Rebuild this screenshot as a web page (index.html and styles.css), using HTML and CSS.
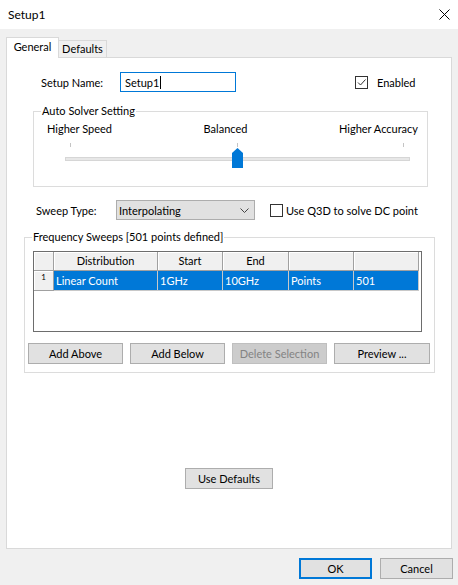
FILE: index.html
```html
<!DOCTYPE html>
<html>
<head>
<meta charset="utf-8">
<link rel="stylesheet" href="styles.css">
</head>
<body>
<div class="titlebar">
  <span class="title">Setup1</span>
  <svg class="close" width="11" height="11" viewBox="0 0 11 11"><path d="M0.5 0.5 L10.5 10.5 M10.5 0.5 L0.5 10.5" stroke="#000" stroke-width="1" fill="none"/></svg>
</div>
<div class="tabs">
  <div class="tab tab-active">General</div>
  <div class="tab tab-inactive">Defaults</div>
</div>
<div class="panel">
  <div class="name-row">
    <span class="name-label">Setup Name:</span>
    <div class="textbox">Setup1<span class="caret"></span></div>
    <span class="checkbox checked"><svg width="11" height="11" viewBox="0 0 11 11"><path d="M2 5.5 L4.5 8 L9.5 2.5" stroke="#333" stroke-width="1" fill="none"/></svg></span>
    <span class="check-label">Enabled</span>
  </div>

  <div class="group solver">
    <span class="legend">Auto Solver Setting</span>
    <div class="slider-labels">
      <span>Higher Speed</span>
      <span>Balanced</span>
      <span>Higher Accuracy</span>
    </div>
    <div class="slider">
      <span class="tick tick-l"></span>
      <span class="tick tick-m"></span>
      <span class="tick tick-r"></span>
      <div class="track"></div>
      <svg class="thumb" width="11" height="20" viewBox="0 0 11 20"><polygon points="0,5 5.5,0 11,5 11,20 0,20" fill="#0078d7"/></svg>
    </div>
  </div>

  <div class="sweep-row">
    <span class="sweep-label">Sweep Type:</span>
    <div class="combo">
      <span>Interpolating</span>
      <svg width="9" height="5" viewBox="0 0 9 5"><path d="M0.5 0.5 L4.5 4.5 L8.5 0.5" stroke="#444" stroke-width="1" fill="none"/></svg>
    </div>
    <span class="checkbox q3d-box"></span>
    <span class="q3d-label">Use Q3D to solve DC point</span>
  </div>

  <div class="group sweeps">
    <span class="legend">Frequency Sweeps [501 points defined]</span>
    <div class="grid">
      <div class="hcell rowhead"></div>
      <div class="hcell">Distribution</div>
      <div class="hcell">Start</div>
      <div class="hcell">End</div>
      <div class="hcell"></div>
      <div class="hcell"></div>
      <div class="filler"></div>
      <div class="hcell rowhead rownum">1</div>
      <div class="dcell">Linear Count</div>
      <div class="dcell">1GHz</div>
      <div class="dcell">10GHz</div>
      <div class="dcell">Points</div>
      <div class="dcell">501</div>
      <div class="filler"></div>
    </div>
    <div class="btn-row">
      <button class="btn">Add Above</button>
      <button class="btn">Add Below</button>
      <button class="btn btn-disabled">Delete Selection</button>
      <button class="btn">Preview ...</button>
    </div>
  </div>

  <button class="btn defaults-btn">Use Defaults</button>
</div>
<div class="footer">
  <button class="btn footer-btn ok-btn">OK</button>
  <button class="btn footer-btn">Cancel</button>
</div>
</body>
</html>
```
FILE: styles.css
```css
* { box-sizing: border-box; }
html, body { margin: 0; padding: 0; }
body {
  width: 458px;
  height: 585px;
  overflow: hidden;
  background: #f0f0f0;
  font-family: Lato, "Noto Sans", sans-serif;
  font-size: 11px;
  color: #000;
}
.titlebar {
  height: 29px;
  background: #fff;
  display: flex;
  align-items: center;
  justify-content: space-between;
  padding: 0 8px 0 8px;
}
.title { font-size: 12px; }
.close { display: block; }

.tabs {
  height: 29px;
  display: flex;
  align-items: flex-end;
  padding-left: 6px;
  margin-bottom: -1px;
  position: relative;
  z-index: 1;
}
.tab {
  border: 1px solid #d9d9d9;
  text-align: center;
}
.tab-active {
  width: 53px;
  height: 21px;
  background: #fff;
  border-bottom: none;
  line-height: 17px;
}
.tab-inactive {
  width: 48px;
  height: 18px;
  background: #f0f0f0;
  border-left: none;
  line-height: 16px;
}

.panel {
  margin: 0 6px;
  height: 492px;
  background: #fff;
  border: 1px solid #d9d9d9;
  display: flex;
  flex-direction: column;
}

.name-row {
  margin-top: 14px;
  height: 20px;
  display: flex;
  align-items: center;
  padding-left: 34px;
}
.name-label { width: 79px; }
.textbox {
  width: 116px;
  height: 20px;
  border: 1px solid #0078d7;
  padding-left: 4px;
  display: flex;
  align-items: center;
}
.caret {
  display: inline-block;
  width: 1px;
  height: 13px;
  background: #000;
  margin-left: 1px;
}
.checkbox {
  width: 13px;
  height: 13px;
  border: 1px solid #333;
  background: #fff;
  display: flex;
  align-items: center;
  justify-content: center;
}
.checked { margin-left: 119px; }
.check-label { margin-left: 9px; }

.group {
  position: relative;
  border: 1px solid #dcdcdc;
}
.legend {
  position: absolute;
  top: -8px;
  left: 7px;
  line-height: 14px;
  padding: 0 1px;
  background: #fff;
}
.solver {
  margin-top: 19px;
  margin-left: 26px;
  width: 395px;
  height: 76px;
  padding: 9px 9px 0 13px;
}
.slider-labels {
  display: flex;
  justify-content: space-between;
  line-height: 16px;
}
.slider {
  position: relative;
  height: 26px;
  margin: 6px 8px 0 18px;
}
.tick {
  position: absolute;
  top: 0;
  width: 1px;
  height: 4px;
  background: #c4c4c4;
}
.tick-l { left: 5px; }
.tick-m { left: 172px; }
.tick-r { left: 338px; }
.track {
  position: absolute;
  top: 14px;
  left: 0;
  right: 0;
  height: 4px;
  background: #e7e7e7;
  border: 1px solid #d6d6d6;
}
.thumb {
  position: absolute;
  top: 5px;
  left: 167px;
  display: block;
}

.sweep-row {
  margin-top: 13px;
  height: 20px;
  display: flex;
  align-items: center;
  padding-left: 29px;
}
.sweep-label { width: 80px; }
.combo {
  width: 139px;
  height: 20px;
  background: #e1e1e1;
  border: 1px solid #adadad;
  display: flex;
  align-items: center;
  justify-content: space-between;
  padding: 0 5px 0 2px;
}
.combo svg { display: block; }
.q3d-box { margin-left: 15px; }
.q3d-label { margin-left: 3px; }

.sweeps {
  margin-top: 17px;
  margin-left: 17px;
  width: 411px;
  height: 136px;
  padding: 13px 0 0 3px;
}
.grid {
  margin-left: 5px;
  width: 389px;
  height: 81px;
  border: 1px solid #6d6d6d;
  display: grid;
  grid-template-columns: 20px 104px 65px 66px 65px 65px 1fr;
  grid-template-rows: 19px 20px;
  align-content: start;
}
.hcell {
  background: #f0f0f0;
  border-right: 1px solid #a0a0a0;
  border-bottom: 1px solid #a0a0a0;
  box-shadow: inset 1px 1px 0 #fff;
  text-align: center;
  line-height: 18px;
}
.rownum {
  font-size: 8px;
  line-height: 12px;
  text-align: center;
}
.dcell {
  background: #0078d7;
  color: #fff;
  border-right: 1px solid #c8c8c8;
  border-bottom: 1px solid #c8c8c8;
  padding-left: 2px;
  line-height: 19px;
}
.filler { background: #fff; }

.btn {
  font-family: inherit;
  font-size: 11px;
  color: #000;
  background: #e1e1e1;
  border: 1px solid #adadad;
  padding: 0;
  margin: 0;
  height: 21px;
  line-height: 19px;
  text-align: center;
}
.btn-row {
  margin-top: 11px;
  display: flex;
  gap: 7px;
}
.btn-row .btn { width: 95px; }
.btn-row .btn:last-child { width: 96px; }
.btn-disabled {
  background: #cccccc;
  border-color: #bfbfbf;
  color: #838383;
}
.defaults-btn {
  margin-top: 95px;
  align-self: center;
  width: 88px;
}

.footer {
  margin-top: 9px;
  display: flex;
  justify-content: flex-end;
  gap: 8px;
  padding-right: 5px;
}
.footer-btn { width: 73px; }
.ok-btn {
  border: 2px solid #0078d7;
  line-height: 17px;
}
```
